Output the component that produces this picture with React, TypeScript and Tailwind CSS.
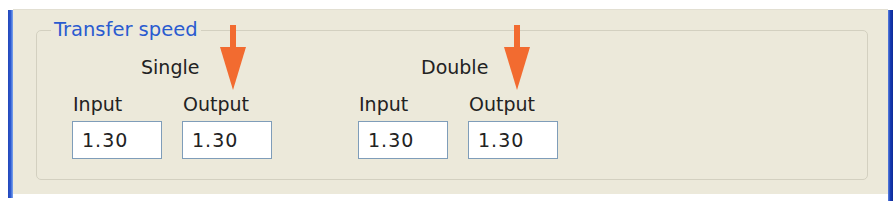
import React from 'react';

const font = { fontFamily: '"DejaVu Sans", Verdana, sans-serif' };

function SpeedBox({ label, value }: { label: string; value: string }) {
  return (
    <div className="flex flex-col">
      <span className="leading-[22px] text-[19px] text-[#222] pl-[1px]">{label}</span>
      <div className="mt-[6px] w-[90px] h-[38px] border border-[#7f9db9] bg-white flex items-center pl-[9px]">
        <span className="leading-[22px] text-[19px] text-[#222] tracking-[1px]">{value}</span>
      </div>
    </div>
  );
}

function SpeedGroup({ title, offset }: { title: string; offset: string }) {
  return (
    <div className="flex flex-col w-[200px]">
      <span className={`leading-[22px] text-[19px] text-[#222] ${offset}`}>{title}</span>
      <div className="flex gap-[20px] mt-[15px]">
        <SpeedBox label="Input" value="1.30" />
        <SpeedBox label="Output" value="1.30" />
      </div>
    </div>
  );
}

function Arrow({ className }: { className: string }) {
  return (
    <svg className={`absolute ${className}`} width="28" height="66" viewBox="0 0 28 66">
      <rect x="11" y="0" width="6" height="24" fill="#f26b30" />
      <polygon points="1,22 27,22 14,65" fill="#f26b30" />
    </svg>
  );
}

export default function App() {
  return (
    <div className="relative w-[896px] h-[201px] bg-white overflow-hidden" style={font}>
      <div className="flex items-start pt-[9px] pl-[8px]">
        <div className="w-[5px] h-[188px] mt-[1px] bg-gradient-to-r from-[#2346b8] via-[#2c58d0] to-[#7fa6ee]" />
        <div className="w-[875px] h-[185px] bg-[#ece9da] border-t border-[#e2dfd2] pt-[9px] pl-[23px]">
          <fieldset className="w-[832px] h-[161px] border border-[#d3d0c0] rounded-[5px]">
            <legend className="ml-[14px] px-[3px] leading-[22px] text-[19.5px] text-[#2a5bd0]">
              Transfer speed
            </legend>
            <div className="flex gap-[86px] mt-[15px] pl-[35px]">
              <SpeedGroup title="Single" offset="pl-[69px]" />
              <SpeedGroup title="Double" offset="pl-[63px]" />
            </div>
          </fieldset>
        </div>
        <div className="w-[5px] h-[192px] mt-[1px] bg-gradient-to-r from-[#5a7fe0] via-[#1638b0] to-[#0d2a98]" />
      </div>
      <Arrow className="left-[219px] top-[25px]" />
      <Arrow className="left-[503px] top-[25px]" />
    </div>
  );
}
